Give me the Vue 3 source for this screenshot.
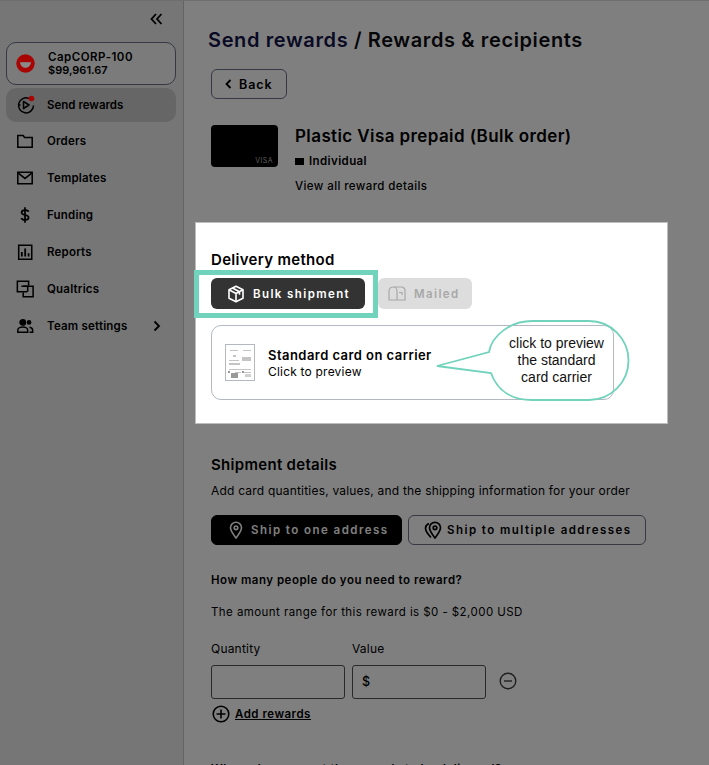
<script setup>
const navItems = [
  { label: 'Orders', icon: 'folder' },
  { label: 'Templates', icon: 'mail' },
  { label: 'Funding', icon: 'dollar' },
  { label: 'Reports', icon: 'chart' },
  { label: 'Qualtrics', icon: 'link' },
  { label: 'Team settings', icon: 'team', arrow: true }
]
</script>

<template>
  <div class="page">
    <aside class="sidebar">
      <div class="collapse-row">
        <svg width="13" height="12" viewBox="0 0 13 12" fill="none" stroke="#000" stroke-width="1.800">
          <path d="M6 1 1.500 6 6 11M11.500 1 7 6l4.500 5" />
        </svg>
      </div>
      <div class="account">
        <svg class="account-logo" width="19" height="19" viewBox="0 0 19 19">
          <circle cx="9.500" cy="9.500" r="9.200" fill="#a80404" />
          <path d="M3.800 6.500h11.400c0 4.500-2.400 7.300-5.700 7.300S3.800 11 3.800 6.500z" fill="#8a8a8a" />
          <path d="M3.800 6h11.400v2.200H3.800z" fill="#a80404" />
        </svg>
        <div class="account-text">
          <div class="account-name">CapCORP-100</div>
          <div class="account-balance">$99,961.67</div>
        </div>
      </div>
      <div class="nav-item active">
        <span class="nav-icon nav-icon-top">
          <svg width="20" height="20" viewBox="0 0 20 20" fill="none" stroke="#000" stroke-width="1.500">
            <path d="M13 3.500A7.500 7.500 0 1 0 17.500 10.500" />
            <path d="M7.500 6.500 13 10l-5.500 3.500zM2.500 10h2" stroke-linejoin="round" />
            <circle cx="15.500" cy="3.500" r="2.800" fill="#a80404" stroke="none" />
          </svg>
        </span>
        Send rewards
      </div>
      <div v-for="item in navItems" :key="item.label" class="nav-item">
        <span class="nav-icon">
          <svg width="18" height="18" viewBox="0 0 20 20" fill="none" stroke="#000" stroke-width="1.700">
            <path v-if="item.icon === 'folder'" d="M2 17V4h6l1.500 2H18v11z" />
            <template v-if="item.icon === 'mail'">
              <path d="M2 3.500h16v13H2z" />
              <path d="m2.500 4.500 7.500 6 7.500-6" />
            </template>
            <template v-if="item.icon === 'dollar'">
              <path d="M14 6.500C13.500 5 12 4.500 10 4.500c-2.200 0-3.800 1-3.800 2.800 0 3.700 7.800 1.700 7.800 5.500 0 1.800-1.800 2.700-4 2.700-1.800 0-3.600-.7-4.100-2.200M10 1.500v17" stroke-width="1.900" />
            </template>
            <template v-if="item.icon === 'chart'">
              <path d="M3 2.500h14.500V18H3z" />
              <path d="M6.500 10v5M10.200 6v9M14 11.500v3.500" stroke-width="2" />
            </template>
            <template v-if="item.icon === 'link'">
              <path d="M12.500 13H1.500V1.500H14V6" />
              <path d="M8 7h11v11.500H8V14" />
              <path d="M6 7h7v6" />
            </template>
            <template v-if="item.icon === 'team'">
              <circle cx="7.500" cy="6" r="3" fill="#000" />
              <path d="M2 17v-2.500c0-2 2.500-3.500 5.500-3.500s5.500 1.500 5.500 3.500V17z" />
              <circle cx="14.500" cy="6" r="2.600" fill="#000" stroke="none" />
              <path d="M15 11.500c2 .4 3.500 1.600 3.500 3.200V17H15" />
            </template>
          </svg>
        </span>
        {{ item.label }}
        <svg v-if="item.arrow" class="nav-arrow" width="8" height="12" viewBox="0 0 8 12" fill="none" stroke="#000" stroke-width="1.800">
          <path d="m1.500 1.500 4.500 4.500-4.500 4.500" />
        </svg>
      </div>
    </aside>

    <main class="main">
      <h1 class="title"><span class="crumb">Send rewards</span> / Rewards &amp; recipients</h1>
      <button class="back">
        <svg width="7" height="10" viewBox="0 0 7 10" fill="none" stroke="#000" stroke-width="1.800">
          <path d="M5.500 1 1.500 5l4 4" />
        </svg>
        Back
      </button>

      <section class="reward">
        <div class="card-thumb"><span>VISA</span></div>
        <div>
          <div class="reward-name">Plastic Visa prepaid (Bulk order)</div>
          <div class="reward-type"><i></i>Individual</div>
          <div class="reward-link">View all reward details</div>
        </div>
      </section>

      <section class="delivery">
        <h2>Delivery method</h2>
        <div class="delivery-tabs">
          <button class="tab tab-on">
            <svg width="18" height="18" viewBox="0 0 18 18" fill="none" stroke="#fff" stroke-width="1.600" stroke-linejoin="round">
              <path d="M9 1.300 16 4.800v8.400l-7 3.500-7-3.500V4.800z" />
              <path d="M2 4.800 9 8.500l7-3.700M9 8.500v8.200M5.500 3l7 3.700v3" />
            </svg>
            Bulk shipment
          </button>
          <button class="tab tab-off">
            <svg width="18" height="15" viewBox="0 0 18 15" fill="none" stroke="#a8a8a8" stroke-width="1.200">
              <path d="M1 14V5a4 4 0 0 1 8 0v9zM5 1h8.500A3.500 3.500 0 0 1 17 4.500V14H1M11 6.500h3V9" />
            </svg>
            Mailed
          </button>
        </div>
        <div class="carrier">
          <svg class="carrier-thumb" width="30" height="37" viewBox="0 0 30 37">
            <rect x="0.500" y="0.500" width="29" height="36" fill="#fff" stroke="#b3b8c2" />
            <g fill="#c4c4c4">
              <rect x="5" y="6" width="8" height="1" />
              <rect x="18" y="6" width="8" height="1" />
              <rect x="8" y="11" width="3" height="2" />
              <rect x="4" y="16" width="10" height="1" />
              <rect x="4" y="19" width="11" height="2" />
              <rect x="17" y="13" width="9" height="4" />
              <rect x="4" y="25" width="22" height="1" />
              <rect x="10" y="28" width="6" height="1" />
              <rect x="19" y="28" width="7" height="1" />
            </g>
            <g fill="#9a9a9a">
              <rect x="3" y="27" width="2" height="2" />
              <rect x="6" y="29" width="7" height="5" />
              <rect x="17" y="27" width="2" height="2" />
              <rect x="20" y="30" width="6" height="3" fill="#d0d0d0" />
            </g>
          </svg>
          <div>
            <div class="carrier-name">Standard card on carrier</div>
            <div class="carrier-sub">Click to preview</div>
          </div>
        </div>
        <div class="tab-frame"></div>
        <div class="callout">
          <svg width="196" height="84" viewBox="0 0 196 84" fill="none" stroke="#72d3bc" stroke-width="1.800">
            <path d="M2 47 54 33C57 16 76 2 97 2H154A39.500 39.500 0 0 1 154 81H97C76 81 62 71 56 54Z" />
          </svg>
          <p>click to preview<br />the standard<br />card carrier</p>
        </div>
      </section>

      <section class="shipment">
        <h2>Shipment details</h2>
        <p class="ship-sub">Add card quantities, values, and the shipping information for your order</p>
        <div class="ship-buttons">
          <button class="ship ship-on">
            <svg width="14" height="18" viewBox="0 0 14 18" fill="none" stroke="#fff" stroke-width="1.600">
              <path d="M7 17C4 13 1.500 10 1.500 6.800a5.500 5.500 0 0 1 11 0C12.500 10 10 13 7 17z" />
              <circle cx="7" cy="6.800" r="1.800" />
            </svg>
            Ship to one address
          </button>
          <button class="ship ship-off">
            <svg width="18" height="18" viewBox="0 0 18 18" fill="none" stroke="#000" stroke-width="1.700">
              <path d="M11 17C8 13 5.500 10 5.500 6.800a5.500 5.500 0 0 1 11 0C16.500 10 14 13 11 17z" />
              <circle cx="11" cy="6.800" r="1.800" />
              <path d="M5 2.500C2.800 3.500 1.500 5 1.500 7.200c0 3 2.500 6 5.500 9.300" />
            </svg>
            Ship to multiple addresses
          </button>
        </div>
        <div class="question">How many people do you need to reward?</div>
        <div class="range">The amount range for this reward is $0 - $2,000 USD</div>
        <div class="fields">
          <label class="field">
            <span>Quantity</span>
            <div class="input"></div>
          </label>
          <label class="field">
            <span>Value</span>
            <div class="input">$</div>
          </label>
          <svg class="remove" width="18" height="18" viewBox="0 0 18 18" fill="none" stroke="#3f3f3f" stroke-width="1.400">
            <circle cx="9" cy="9" r="7.800" />
            <path d="M5 9h8" />
          </svg>
        </div>
        <div class="add-row">
          <svg width="18" height="18" viewBox="0 0 18 18" fill="none" stroke="#000" stroke-width="1.600">
            <circle cx="9" cy="9" r="7.800" />
            <path d="M4.500 9h9M9 4.500v9" />
          </svg>
          <span>Add rewards</span>
        </div>
        <div class="question where">Where do you want the rewards to be delivered?</div>
      </section>
    </main>
    <div class="overlay"></div>
  </div>
</template>

<style scoped>
.page {
  position: relative;
  display: flex;
  width: 709px;
  height: 765px;
  overflow: hidden;
  background: #fff;
  color: #000;
  font-family: Inter, "Noto Sans", sans-serif;
}

.overlay {
  position: absolute;
  inset: 0;
  z-index: 1;
  background: rgba(0, 0, 0, 0.5);
  border-top: 1px solid #6e6e6e;
}

.sidebar {
  flex: none;
  box-sizing: border-box;
  width: 184px;
  padding: 0 7px 0 6px;
  background: #ececec;
  border-right: 1px solid #c8c8c8;
}

.collapse-row {
  display: flex;
  justify-content: flex-end;
  height: 42px;
  padding: 13px 13px 0 0;
  box-sizing: border-box;
}

.account {
  display: flex;
  align-items: center;
  box-sizing: border-box;
  height: 43px;
  margin-bottom: 3px;
  padding-left: 9px;
  border: 1px solid #6c7386;
  border-radius: 10px;
  background: #f6f6f6;
}

.account-logo {
  position: relative;
  z-index: 2;
  margin-right: 13px;
}

.account-text {
  font-weight: 600;
  line-height: 13px;
}

.account-name {
  font-size: 11.500px;
  letter-spacing: 0.5px;
}

.account-balance {
  font-size: 11px;
}

.nav-item {
  display: flex;
  align-items: center;
  box-sizing: border-box;
  height: 37px;
  padding-left: 10px;
  padding-bottom: 1px;
  font-size: 11.500px;
  font-weight: 600;
  letter-spacing: 0.2px;
}

.nav-item.active {
  height: 34px;
  margin-bottom: 1px;
  border-radius: 10px;
  background: #cdcdcd;
  letter-spacing: 0;
}

.nav-icon {
  display: flex;
  width: 18px;
  margin-right: 13px;
}

.nav-icon-top {
  position: relative;
  z-index: 2;
  width: 20px;
  margin-right: 11px;
}

.nav-arrow {
  margin-left: auto;
  margin-right: 15px;
}

.main {
  flex: 1;
  min-width: 0;
  padding-left: 27px;
}

.title {
  margin: 28px 0 0 -3px;
  font-size: 20px;
  line-height: 24px;
  font-weight: 600;
  letter-spacing: 0.62px;
  color: #0c0c12;
}

.crumb {
  color: #14144a;
}

.back {
  display: flex;
  align-items: center;
  gap: 7px;
  box-sizing: border-box;
  width: 76px;
  height: 30px;
  margin-top: 17px;
  padding: 0 0 0 13px;
  border: 1px solid #6c7386;
  border-radius: 6px;
  background: #fff;
  color: #000;
  font: 600 12.500px Inter, sans-serif;
  letter-spacing: 0.9px;
}

.reward {
  display: flex;
  gap: 17px;
  margin-top: 26px;
}

.card-thumb {
  position: relative;
  flex: none;
  width: 67px;
  height: 42px;
  border-radius: 4px;
  background: #000;
}

.card-thumb span {
  position: absolute;
  right: 5px;
  bottom: 2px;
  color: #b4b4b4;
  font-size: 7px;
  letter-spacing: 0.4px;
}

.reward-name {
  margin-top: 1px;
  font-size: 17px;
  line-height: 20px;
  font-weight: 600;
  letter-spacing: 0.4px;
}

.reward-type {
  display: flex;
  align-items: center;
  gap: 5px;
  margin-top: 7px;
  font-size: 11.500px;
  line-height: 16px;
  font-weight: 600;
  letter-spacing: 0.4px;
}

.reward-type i {
  width: 9px;
  height: 7px;
  background: #000;
}

.reward-link {
  margin-top: 9px;
  font-size: 11.500px;
  line-height: 16px;
  font-weight: 500;
  letter-spacing: 0.4px;
}

.delivery {
  position: relative;
  z-index: 2;
  box-sizing: border-box;
  width: 473px;
  height: 202px;
  margin: 28px 0 0 -16px;
  padding: 28px 15px 0;
  background: #fff;
  border: 1px solid #bdbdbd;
}

h2 {
  margin: 0;
  font-size: 15px;
  line-height: 18px;
  font-weight: 600;
  letter-spacing: 0.3px;
}

.delivery-tabs {
  display: flex;
  gap: 13px;
  margin-top: 9px;
}

.tab {
  display: flex;
  align-items: center;
  box-sizing: border-box;
  height: 31px;
  border: none;
  border-radius: 6px;
  font: 600 11.500px Inter, sans-serif;
  letter-spacing: 1.400px;
}

.tab-on {
  gap: 8px;
  width: 154px;
  padding-left: 16px;
  background: #333;
  color: #fff;
}

.tab-off {
  gap: 8px;
  width: 94px;
  padding-left: 10px;
  background: #ddd;
  color: #a8a8a8;
}

.tab-frame {
  position: absolute;
  left: -2px;
  top: 47px;
  box-sizing: border-box;
  width: 184px;
  height: 48px;
  border: 5px solid #72d3bc;
  pointer-events: none;
}

.carrier {
  display: flex;
  align-items: center;
  gap: 13px;
  box-sizing: border-box;
  width: 403px;
  height: 75px;
  margin-top: 16px;
  padding-left: 13px;
  border: 1px solid #b3b8c2;
  border-radius: 10px;
}

.carrier-thumb {
  flex: none;
}

.carrier-name {
  font-size: 13px;
  line-height: 16px;
  font-weight: 600;
  letter-spacing: 0.45px;
}

.carrier-sub {
  margin-top: 2px;
  font-size: 12px;
  line-height: 14px;
  letter-spacing: 0.2px;
}

.callout {
  position: absolute;
  left: 239px;
  top: 96px;
  width: 196px;
  height: 84px;
}

.callout svg {
  display: block;
}

.callout p {
  position: absolute;
  top: 16px;
  left: 60px;
  width: 123px;
  margin: 0;
  font: 14px/17px "Liberation Sans", Arial, sans-serif;
  text-align: center;
  color: #111;
}

.shipment {
  margin-top: 32px;
}

.ship-sub {
  margin: 9px 0 0;
  font-size: 12px;
  line-height: 16px;
  letter-spacing: 0.2px;
}

.ship-buttons {
  display: flex;
  gap: 6px;
  margin-top: 16px;
}

.ship {
  display: flex;
  align-items: center;
  box-sizing: border-box;
  height: 30px;
  border-radius: 6px;
  font: 600 11.500px Inter, sans-serif;
  letter-spacing: 1.450px;
}

.ship-on {
  gap: 8px;
  width: 191px;
  padding-left: 17px;
  border: 1px solid #000;
  background: #000;
  color: #fff;
}

.ship-off {
  gap: 5px;
  width: 238px;
  padding-left: 15px;
  border: 1px solid #6c7386;
  background: #fff;
  color: #000;
}

.question {
  margin-top: 27px;
  font-size: 11.500px;
  line-height: 16px;
  font-weight: 600;
  letter-spacing: 0.5px;
}

.range {
  margin-top: 16px;
  font-size: 11.500px;
  line-height: 16px;
  letter-spacing: 0.43px;
}

.fields {
  display: flex;
  align-items: flex-end;
  gap: 7px;
  margin-top: 21px;
}

.field {
  display: block;
  width: 134px;
}

.field span {
  display: block;
  font-size: 12px;
  line-height: 16px;
  letter-spacing: 0.2px;
  margin-bottom: 8px;
}

.input {
  box-sizing: border-box;
  height: 34px;
  padding-left: 9px;
  border: 1px solid #555;
  border-radius: 3px;
  font-size: 12.500px;
  font-weight: 500;
  line-height: 32px;
}

.remove {
  margin: 0 0 9px 6px;
}

.add-row {
  display: flex;
  align-items: center;
  gap: 5px;
  margin-top: 6px;
  margin-left: 1px;
  font-size: 11.500px;
  font-weight: 600;
  letter-spacing: 0.5px;
}

.add-row span {
  text-decoration: underline;
}

.where {
  margin-top: 38px;
}
</style>

<style>
html,
body {
  margin: 0;
  overflow: hidden;
}
</style>
